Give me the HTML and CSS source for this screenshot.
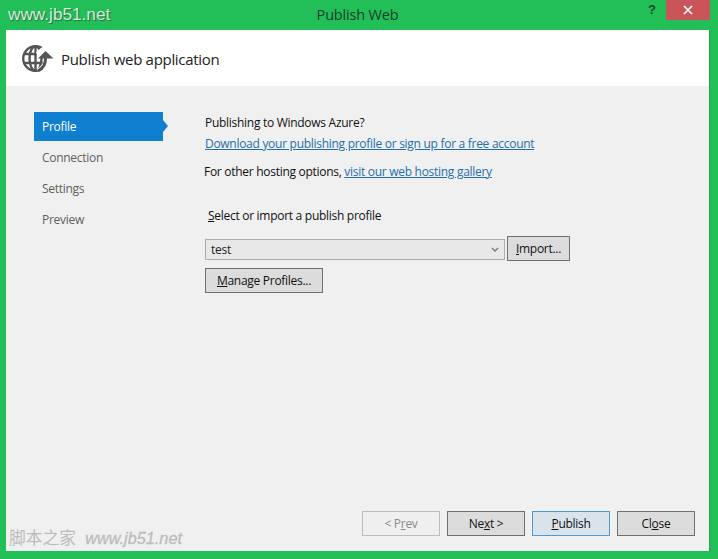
FILE: index.html
```html
<!DOCTYPE html>
<html lang="en">
<head>
<meta charset="utf-8">
<title>Publish Web</title>
<link rel="stylesheet" href="styles.css">
</head>
<body>
<div class="window">
  <div class="titlebar">
    <span class="title">Publish Web</span>
    <span class="help">?</span>
    <span class="close-x"><svg width="10" height="10" viewBox="0 0 10 10"><path d="M1 1 9 9M9 1 1 9" stroke="#fff" stroke-width="1.6" fill="none"/></svg></span>
  </div>
  <div class="client">
    <header class="head">
      <svg class="globe" width="32" height="30" viewBox="0 0 32 30">
        <g fill="none" stroke="#555" stroke-width="2.4">
          <circle cx="13.500" cy="15.500" r="12.300"/>
          <ellipse cx="13.500" cy="15.500" rx="6" ry="12.300"/>
          <path d="M13.500 3V28M3 11H24M3 20H24"/>
        </g>
        <path d="M24 14C25 21 22 26 16 28.500" fill="none" stroke="#fff" stroke-width="6"/>
        <path d="M14 9 23 2 32 14 16 15Z" fill="#fff"/>
        <path d="M23.500 14C24 21 21 25.500 16 28" fill="none" stroke="#555" stroke-width="3"/>
        <path d="M23.500 8 31.500 15.500H16Z" fill="#555"/>
      </svg>
      <span class="head-text">Publish web application</span>
    </header>
    <div class="main">
      <nav class="nav">
        <div class="nav-item active">Profile</div>
        <div class="nav-item">Connection</div>
        <div class="nav-item">Settings</div>
        <div class="nav-item">Preview</div>
      </nav>
      <section class="content">
        <p class="line azure">Publishing to Windows Azure?</p>
        <p class="line"><a class="link">Download your publishing profile or sign up for a free account</a></p>
        <p class="line other">For other hosting options, <a class="link">visit our web hosting gallery</a></p>
        <p class="line pick"><u>S</u>elect or import a publish profile</p>
        <div class="profile-row">
          <div class="select"><span>test</span>
            <svg width="8" height="5" viewBox="0 0 8 5"><path d="M1 1 4 4 7 1" fill="none" stroke="#777" stroke-width="1.300"/></svg>
          </div>
          <button class="btn import"><u>I</u>mport...</button>
        </div>
        <button class="btn manage"><u>M</u>anage Profiles...</button>
      </section>
    </div>
    <footer class="foot">
      <button class="btn wide disabled">&lt; P<u>r</u>ev</button>
      <button class="btn wide">Ne<u>x</u>t &gt;</button>
      <button class="btn wide primary"><u>P</u>ublish</button>
      <button class="btn wide">Cl<u>o</u>se</button>
    </footer>
    <div class="mark-bottom"><span class="cjk">脚本之家</span><span class="url">www.jb51.net</span></div>
  </div>
  <div class="mark-top">www.jb51.net</div>
</div>
</body>
</html>
```
FILE: styles.css
```css
html, body { margin: 0; padding: 0; }
body { width: 718px; height: 559px; overflow: hidden; }
.window {
  position: relative;
  box-sizing: border-box;
  width: 718px;
  height: 559px;
  background: #22bf58;
  padding: 0 9px 8px 6px;
  display: flex;
  flex-direction: column;
  font: 12px "Open Sans", "Noto Sans", sans-serif;
  letter-spacing: -0.285px;
  color: #1e1e1e;
}
.titlebar { position: relative; height: 30px; flex: none; text-align: center; }
.title { display: block; font-size: 14.500px; letter-spacing: -0.18px; line-height: 29px; color: #1c3d28; }
.help { position: absolute; left: 642px; top: 1px; font: bold 13px/18px "Liberation Sans", sans-serif; color: #0f4a22; }
.close-x {
  position: absolute;
  left: 660px;
  top: 0;
  width: 44px;
  height: 20px;
  background: #c9555a;
  display: flex;
  align-items: center;
  justify-content: center;
}
.client {
  position: relative;
  flex: 1;
  display: flex;
  flex-direction: column;
  background: #f0f0f0;
  box-shadow: 1px 0 0 #1aa84a;
}
.head {
  height: 56px;
  flex: none;
  box-sizing: border-box;
  background: #fff;
  padding: 0 0 0 16px;
  display: flex;
  align-items: center;
  gap: 7px;
}
.head-text { font-size: 15px; letter-spacing: -0.31px; line-height: 22px; padding-top: 1px; color: #222; }
.main { flex: 1; display: flex; padding-top: 26px; }
.nav { width: 129px; margin-left: 28px; flex: none; }
.nav-item { height: 31px; line-height: 29px; padding-left: 8px; color: #5f5f5f; }
.nav-item.active { position: relative; height: 29px; margin-bottom: 2px; background: #0f80cf; color: #fff; }
.nav-item.active::after {
  content: "";
  position: absolute;
  left: 129px;
  top: 8px;
  border-left: 5px solid #0f80cf;
  border-top: 6px solid transparent;
  border-bottom: 6px solid transparent;
}
.content { margin-left: 42px; width: 370px; }
.line { margin: 0; line-height: 20px; color: #111; }
.azure { padding-top: 1px; }
.link { color: #1f6fa8; text-decoration: underline; }
.azure + .line { margin-top: 1px; }
.other { margin: 8px 0 0 -1px; }
.pick { margin: 24px 0 0 3px; }
.profile-row { display: flex; align-items: flex-end; margin-top: 10px; width: 365px; }
.select {
  box-sizing: border-box;
  width: 300px;
  height: 21px;
  margin-bottom: 1px;
  border: 1px solid #adadad;
  background: #e8e8e8;
  display: flex;
  align-items: center;
  justify-content: space-between;
  padding: 0 5px;
  color: #222;
}
.btn {
  box-sizing: border-box;
  padding: 0;
  height: 25px;
  border: 1px solid #707070;
  background: #dcdcdc;
  font: inherit;
  letter-spacing: inherit;
  color: #111;
}
.import { width: 63px; margin-left: 2px; }
.manage { display: block; width: 118px; margin-top: 7px; }
.foot { flex: none; display: flex; justify-content: flex-end; gap: 7px; padding: 0 14px 15px 0; }
.wide { width: 78px; }
.disabled { background: #efefef; border-color: #bcbcbc; color: #8a8a8a; }
.primary { background: #dae3ea; border-color: #4d9ad8; }
.mark-bottom {
  position: absolute;
  left: 3px;
  bottom: 2px;
  display: flex;
  align-items: baseline;
  gap: 9px;
  letter-spacing: 0;
  color: #bcbcbc;
}
.cjk { font: 16.800px "Noto Sans CJK SC", sans-serif; }
.url { font: italic 16.300px "Liberation Sans", sans-serif; -webkit-text-stroke: 0.3px #bcbcbc; }
.mark-top {
  position: absolute;
  left: 8px;
  top: 4px;
  font: 17.200px "Liberation Sans", sans-serif;
  letter-spacing: 0;
  color: #d6ead9;
  text-shadow: 1px 1px 1px #2c6a43;
}
```
